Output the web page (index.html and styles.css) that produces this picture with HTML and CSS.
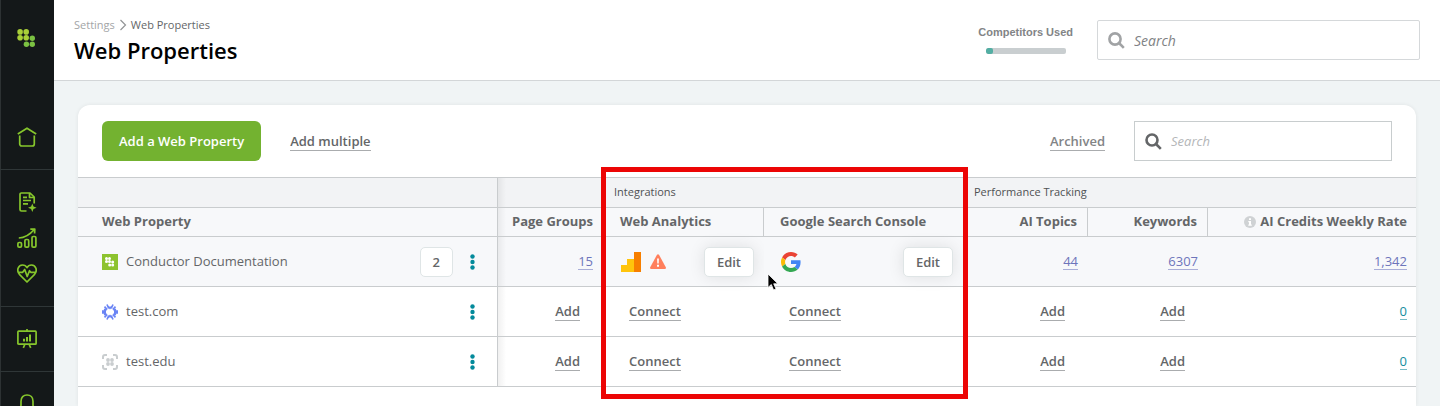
FILE: index.html
```html
<!DOCTYPE html>
<html lang="en">
<head>
<meta charset="utf-8">
<title>Web Properties</title>
<link rel="stylesheet" href="styles.css">
</head>
<body>
<nav class="sidebar" aria-label="Main">
  <a class="brand" href="#" aria-label="Home page">
    <svg width="20" height="20" viewBox="0 0 20 20"><g fill="#a9cf38"><circle cx="4.100" cy="2.900" r="2.800"/><circle cx="10.200" cy="2.900" r="2.800"/><circle cx="4.100" cy="8.700" r="2.800"/><circle cx="10.200" cy="8.700" r="2.800"/></g><g fill="#7bc142"><circle cx="16.300" cy="9.200" r="2.700"/><circle cx="10.400" cy="15.200" r="2.700"/><circle cx="16.300" cy="15.200" r="2.700"/></g></svg>
  </a>
  <div class="nav-group">
    <a href="#" aria-label="Home"><svg class="line" viewBox="0 0 20 20"><path d="M.8 7 10 1.200 19.200 7M2.700 8.500V17a2 2 0 0 0 2 2h10.600a2 2 0 0 0 2-2V8.500"/></svg></a>
  </div>
  <div class="nav-group">
    <a href="#" aria-label="Content"><svg class="line" viewBox="0 0 20 20"><path d="M9.500 19H4.500A1.500 1.500 0 0 1 3 17.500V2.300A1.300 1.300 0 0 1 4.300 1H13l4.200 4v6.500M12.500 1v4.500h4.700M6 5.300h4M6 8.500h8M6 11.800h5"/><path class="solid" d="m15.300 11.500 1.200 3.100 3.100 1.200-3.100 1.200-1.200 3-1.200-3-3.100-1.200 3.100-1.200z"/></svg></a>
    <a href="#" aria-label="Performance"><svg class="line" viewBox="0 0 20 20"><rect x=".9" y="14.500" width="3.600" height="4.600" rx="1.200"/><rect x="7.900" y="11.500" width="3.800" height="7.600" rx="1.200"/><rect x="15" y="8.500" width="3.900" height="10.600" rx="1.200"/><path d="M1.800 10C8 9.800 13 6.500 17.200 1.500M13.300 1.200l4.500-.2-.2 4.500"/></svg></a>
    <a href="#" aria-label="Monitoring"><svg class="line" viewBox="0 0 20 20"><path d="M10 18 2.400 10.300C-.7 6.600 1 1 5.500 1 7.600 1 9.200 2.200 10 3.700 10.800 2.200 12.400 1 14.500 1c4.500 0 6.200 5.600 3.100 9.300zM1.500 8.300h4.200l2-2.800 2.500 7 2.300-5.800 1.300 1.600h4.700"/></svg></a>
  </div>
  <div class="nav-group">
    <a href="#" aria-label="Reports"><svg class="line" viewBox="0 0 20 20"><rect x=".9" y="2.200" width="18.200" height="13" rx=".8"/><path d="M10 0v2.200M7.800 15.500 6.300 18.800M12.200 15.500l1.500 3.300"/><path d="M7 12.500v-2.700M10 12.500V8M13 12.500V5.500" stroke-width="2"/></svg></a>
  </div>
  <div class="nav-group">
    <a href="#" aria-label="Notifications"><svg class="line" viewBox="0 0 20 20"><path d="M1.500 16.500c2-1.500 2.500-3 2.500-6V7.200C4 3.500 6.500 1 10 1s6 2.500 6 6.200v3.300c0 3 .5 4.500 2.500 6z"/></svg></a>
  </div>
</nav>

<div class="page">
  <header class="topbar">
    <div class="heading">
      <div class="crumbs"><a href="#">Settings</a><svg width="8" height="12" viewBox="0 0 8 12"><path d="M1.500 1 6.500 6l-5 5" fill="none" stroke="#929496" stroke-width="1.200"/></svg><span>Web Properties</span></div>
      <h1>Web Properties</h1>
    </div>
    <div class="usage">
      <span id="usage-label">Competitors Used</span>
      <div class="meter" role="img" aria-labelledby="usage-label"><div class="meter-fill" style="width:9%"></div></div>
    </div>
    <label class="search search-global">
      <svg width="17" height="17" viewBox="0 0 17 17"><circle cx="7" cy="7" r="5.600"/><path d="m11 11 4.800 4.800"/></svg>
      <input type="search" placeholder="Search" aria-label="Search">
    </label>
  </header>

  <main class="card">
    <div class="toolbar">
      <button class="primary" type="button">Add a Web Property</button>
      <a class="action" href="#">Add multiple</a>
      <a class="action archived" href="#">Archived</a>
      <label class="search search-table">
        <svg width="17" height="17" viewBox="0 0 17 17"><circle cx="7" cy="7" r="5.500"/><path d="m11 11 4.800 4.800"/></svg>
        <input type="search" placeholder="Search" aria-label="Search web properties">
      </label>
    </div>

    <table class="grid">
      <colgroup><col class="c-name"><col class="c-groups"><col class="c-analytics"><col class="c-console"><col class="c-topics"><col class="c-keywords"><col class="c-rate"></colgroup>
      <thead>
        <tr class="bands">
          <td class="divided"></td>
          <td class="shade"></td>
          <th class="integrations" colspan="2" scope="colgroup">Integrations<span class="highlight"></span></th>
          <th colspan="3" scope="colgroup">Performance Tracking</th>
        </tr>
        <tr class="heads">
          <th class="name divided" scope="col">Web Property</th>
          <th class="num groups shade" scope="col">Page Groups</th>
          <th class="divided" scope="col">Web Analytics</th>
          <th scope="col">Google Search Console</th>
          <th class="num divided" scope="col">AI Topics</th>
          <th class="num divided" scope="col">Keywords</th>
          <th class="num rate" scope="col"><svg class="info" width="12" height="12" viewBox="0 0 12 12"><circle cx="6" cy="6" r="6" fill="#cfd2d4"/><path d="M5 2.300h2v1.600H5zM4.300 5H7v3.500h.8v1.300H4.300V8.500H5V6.200h-.7z" fill="#fff"/></svg>AI Credits Weekly Rate</th>
        </tr>
      </thead>
      <tbody>
        <tr class="selected">
          <td class="name divided"><div class="property">
            <svg width="16" height="16" viewBox="0 0 16 16"><path fill="#8dc32e" d="M0 0h16v16H0z"/><g fill="#fff"><circle cx="4.500" cy="4.500" r="1.500"/><circle cx="7.500" cy="4.500" r="1.500"/><circle cx="4.500" cy="7.500" r="1.500"/><circle cx="7.500" cy="7.500" r="1.500"/><circle cx="10.700" cy="8" r="1.500"/><circle cx="7.700" cy="11" r="1.500"/><circle cx="10.700" cy="11" r="1.500"/></g></svg>
            <span class="label">Conductor Documentation</span>
            <button class="count" type="button">2</button>
            <button class="more" type="button" aria-label="More options"><svg width="5" height="16" viewBox="0 0 5 16"><circle cx="2.500" cy="2.500" r="2.200"/><circle cx="2.500" cy="8" r="2.200"/><circle cx="2.500" cy="13.500" r="2.200"/></svg></button>
          </div></td>
          <td class="num groups shade"><a class="value" href="#">15</a></td>
          <td class="controls"><div class="linked">
            <svg width="20" height="20" viewBox="0 0 20 20"><path fill="#ffc40c" d="M0 13h6V7h7v13H0z"/><path fill="#f77f00" d="M13 0h7v20h-7z"/></svg>
            <svg class="warning" width="16" height="15" viewBox="0 0 16 15"><path fill="#ff7f5c" d="M7 .8q1-1.300 2 0l6.800 12.400q.6 1.600-1 1.800H1.200q-1.600-.2-1-1.800z"/><path fill="#fff" d="M7.100 4.500h1.800l-.2 5H7.300zM7 10.700h2v2H7z"/></svg>
            <button class="edit" type="button">Edit</button>
          </div></td>
          <td class="controls console"><div class="linked">
            <svg width="20" height="20" viewBox="0 0 48 48"><path fill="#EA4335" d="M24 9.500c3.540 0 6.710 1.220 9.210 3.600l6.850-6.850C35.900 2.380 30.470 0 24 0 14.620 0 6.510 5.380 2.560 13.220l7.980 6.190C12.430 13.720 17.740 9.500 24 9.500z"/><path fill="#4285F4" d="M46.980 24.550c0-1.570-.15-3.090-.38-4.550H24v9.020h12.940c-.58 2.960-2.260 5.480-4.780 7.180l7.730 6c4.510-4.180 7.090-10.360 7.090-17.650z"/><path fill="#FBBC05" d="M10.530 28.590A14.500 14.500 0 0 1 9.770 24c0-1.600.27-3.140.76-4.590l-7.980-6.190A23.900 23.900 0 0 0 0 24c0 3.880.92 7.540 2.560 10.780z"/><path fill="#34A853" d="M24 48c6.480 0 11.930-2.130 15.890-5.810l-7.730-6c-2.150 1.450-4.920 2.300-8.160 2.300-6.260 0-11.570-4.220-13.470-9.910l-7.980 6.190C6.510 42.620 14.620 48 24 48z"/></svg>
            <button class="edit" type="button">Edit</button>
          </div>
          <svg class="pointer" width="13" height="19" viewBox="0 0 13 19"><path d="M1 1v13.500l3.300-3 2.300 5.400 2.400-1-2.300-5.100h4.200z" stroke="#fff" stroke-width=".8"/></svg></td>
          <td class="num"><a class="value" href="#">44</a></td>
          <td class="num"><a class="value" href="#">6307</a></td>
          <td class="num rate"><a class="value" href="#">1,342</a></td>
        </tr>
        <tr>
          <td class="name divided"><div class="property">
            <svg width="16" height="16" viewBox="0 0 16 16" fill="none" stroke="#6a84f5" stroke-width="1.700"><path d="M5 .5 6.800 4.500M11 .5 9.200 4.500M5 15.500l1.800-4M11 15.500l-1.800-4M0 7.200h4M0 8.800h4M16 7.200h-4M16 8.800h-4M2.500 2.700 5.200 5.500M13.500 2.700 10.800 5.500M2.500 13.300 5.200 10.500M13.500 13.300 10.800 10.500M6.300 2.500 8 4.200l1.700-1.700M6.300 13.500 8 11.800l1.700 1.700M2 5.200l2.500 1M14 5.200l-2.500 1M2 10.800l2.500-1M14 10.800l-2.500-1"/></svg>
            <span class="label">test.com</span>
            <button class="more" type="button" aria-label="More options"><svg width="5" height="16" viewBox="0 0 5 16"><circle cx="2.500" cy="2.500" r="2.200"/><circle cx="2.500" cy="8" r="2.200"/><circle cx="2.500" cy="13.500" r="2.200"/></svg></button>
          </div></td>
          <td class="num groups groups-add shade"><a class="action" href="#">Add</a></td>
          <td class="connect"><a class="action" href="#">Connect</a></td>
          <td class="connect"><a class="action" href="#">Connect</a></td>
          <td class="num add"><a class="action" href="#">Add</a></td>
          <td class="num add"><a class="action" href="#">Add</a></td>
          <td class="num rate"><a class="value zero" href="#">0</a></td>
        </tr>
        <tr>
          <td class="name divided"><div class="property">
            <svg width="16" height="16" viewBox="0 0 16 16"><path d="M1 5V3a2 2 0 0 1 2-2h2M11 1h2a2 2 0 0 1 2 2v2M15 11v2a2 2 0 0 1-2 2h-2M5 15H3a2 2 0 0 1-2-2v-2" fill="none" stroke="#c9cdcf" stroke-width="2"/><g fill="#c9cdcf"><circle cx="6" cy="6" r="1.900"/><circle cx="10" cy="6" r="1.900"/><circle cx="6" cy="10" r="1.900"/><circle cx="10" cy="10" r="1.900"/></g></svg>
            <span class="label">test.edu</span>
            <button class="more" type="button" aria-label="More options"><svg width="5" height="16" viewBox="0 0 5 16"><circle cx="2.500" cy="2.500" r="2.200"/><circle cx="2.500" cy="8" r="2.200"/><circle cx="2.500" cy="13.500" r="2.200"/></svg></button>
          </div></td>
          <td class="num groups groups-add shade"><a class="action" href="#">Add</a></td>
          <td class="connect"><a class="action" href="#">Connect</a></td>
          <td class="connect"><a class="action" href="#">Connect</a></td>
          <td class="num add"><a class="action" href="#">Add</a></td>
          <td class="num add"><a class="action" href="#">Add</a></td>
          <td class="num rate"><a class="value zero" href="#">0</a></td>
        </tr>
      </tbody>
    </table>
  </main>
</div>
</body>
</html>
```
FILE: styles.css
```css
* { box-sizing: border-box; }

body {
  margin: 0;
  min-height: 100vh;
  display: flex;
  background: #f0f4f5;
  color: #646668;
  font: 13px/20px "Open Sans", sans-serif;
}

a { color: inherit; text-decoration: none; }
button, input { font: inherit; color: inherit; }
svg { display: block; flex: none; }

.sidebar {
  flex: 0 0 54px;
  height: 100vh;
  overflow: hidden;
  position: sticky;
  top: 0;
  background: #141819;
  box-shadow: inset 1px 0 #2d3233;
}
.brand { display: block; padding: 29px 16px 56px; }
.nav-group {
  display: flex;
  flex-direction: column;
  align-items: center;
  gap: 16px;
  padding: 22px 0;
  border-bottom: 1px solid #2f3637;
}
.line { width: 20px; height: 20px; fill: none; stroke: #86c62c; stroke-width: 1.7; stroke-linejoin: round; }
.line .solid { fill: #86c62c; stroke: none; }

.page { flex: 1; min-width: 0; display: flex; flex-direction: column; }

.topbar {
  display: flex;
  align-items: center;
  padding: 20px;
  background: #fff;
  border-bottom: 1px solid #d3d6d8;
}
.heading { flex: 1; margin: -8px 0 -12px; }
.crumbs { display: flex; align-items: center; gap: 4px; font-size: 11px; line-height: 16px; color: #646668; }
.crumbs a { color: #a3a5a7; }
h1 { margin: 0; font-size: 22px; line-height: 34px; font-weight: 600; color: #000; }

.usage {
  display: flex;
  flex-direction: column;
  align-items: center;
  gap: 8px;
  margin: -2px 24px 0 0;
  font: bold 11px/16px "Liberation Sans", Arial, sans-serif;
  color: #828486;
}
.meter { width: 80px; height: 6px; border-radius: 2px; background: #c9ced0; overflow: hidden; }
.meter-fill { height: 100%; border-radius: 2px; background: #53aea3; }

.search {
  display: flex;
  align-items: center;
  gap: 9px;
  height: 40px;
  padding: 0 10px;
  background: #fff;
  border: 1px solid #c8cdce;
}
.search svg { fill: none; stroke: #646668; stroke-width: 2.6; }
.search input { flex: 1; min-width: 0; padding: 0; border: 0; outline: 0; background: none; }
.search input::placeholder { font-style: italic; color: #b4b6b8; opacity: 1; }
.search-global { width: 323px; border-color: #d5d8da; border-radius: 2px; font-size: 14px; }
.search-global svg { stroke: #a1a3a5; }
.search-global input { padding-top: 2px; }
.search-global input::placeholder { color: #808284; }
.search-table { width: 258px; }

.card {
  flex: 1;
  margin: 24px 24px 0;
  background: #fff;
  border-radius: 12px 12px 0 0;
  box-shadow: 0 0 4px rgba(0, 0, 0, .07);
}
.toolbar { display: flex; align-items: center; padding: 16px 24px; }
.primary {
  height: 40px;
  padding: 0 17px;
  border: 0;
  border-radius: 6px;
  background: #73b230;
  color: #fff;
  font-weight: 600;
}
.toolbar .action { margin-left: 29px; }
.toolbar .archived { margin-left: auto; margin-right: 29px; color: #828486; }
.action {
  display: inline-block;
  line-height: 18px;
  font-weight: 600;
  border-bottom: 1px solid #aaacae;
}
.value { display: inline-block; line-height: 16px; color: #6d75bb; border-bottom: 1px solid #a9aed8; }
.zero { color: #158d9e; border-color: #77bcc6; }

.grid { width: 100%; table-layout: fixed; border-collapse: separate; border-spacing: 0; border-top: 1px solid #c9ccce; }
.c-name { width: 420px; }
.c-groups { width: 106px; }
.c-analytics { width: 160px; }
.c-console { width: 200px; }
.c-topics { width: 124px; }
.c-keywords { width: 120px; }

.grid th, .grid td { height: 50px; padding: 0 10px 2px 16px; text-align: left; border-bottom: 1px solid #c9ccce; white-space: nowrap; }
.grid .divided { border-right: 1px solid #c9ccce; }
.grid .bands th, .grid .bands td { height: 30px; padding: 0 10px 2px; background-color: #f2f3f5; font-size: 11px; font-weight: 400; color: #4f5153; }
.grid .heads th { height: 29px; background-color: #f7f8fa; font-weight: 700; }
.grid .selected td { background-color: #f7f8fa; }
.grid .num { text-align: right; }
.grid .groups { padding-left: 8px; padding-right: 11px; }
.grid .groups-add { padding-right: 24px; }
.grid .add { padding-right: 23px; }
.grid .connect { padding-left: 25px; }
.grid .name { padding: 0 22px 0 24px; }
.grid .heads .name { padding-bottom: 2px; }
.grid .controls { padding-bottom: 0; padding-right: 10px; }
.grid .console { padding-right: 11px; }
.grid .rate { padding-right: 9px; }
.grid .shade { background-image: linear-gradient(90deg, rgba(0, 0, 0, .06), transparent 8px); }

.info { display: inline-block; margin-right: 4px; vertical-align: -2px; }

.property { display: flex; align-items: center; gap: 8px; }
.label { flex: 1; padding-bottom: 2px; }
.count, .edit {
  height: 30px;
  padding: 0 12px;
  border: 1px solid #dfe5e6;
  border-radius: 5px;
  background: #fff;
  font-weight: 600;
}
.more { margin-left: 9px; padding: 0; border: 0; background: none; fill: #038a9b; }
.linked { display: flex; align-items: center; gap: 9px; padding-left: 1px; }
.edit { margin-left: auto; box-shadow: 0 0 16px rgba(0, 0, 0, .1); }

.integrations, .console { position: relative; }
.highlight {
  position: absolute;
  z-index: 1;
  top: -11px;
  left: -3px;
  right: -4px;
  height: 232px;
  border: 5px solid #ec0505;
  pointer-events: none;
}
.pointer { position: absolute; top: 36px; left: 3px; }
```
